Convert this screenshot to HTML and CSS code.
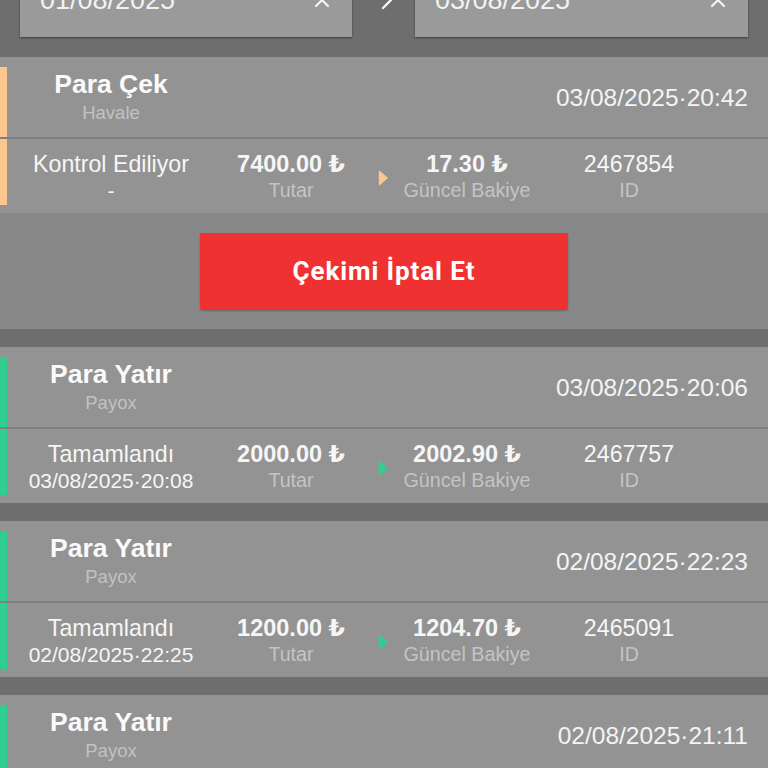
FILE: index.html
```html
<!DOCTYPE html>
<html lang="tr">
<head>
<meta charset="utf-8">
<link rel="stylesheet" href="styles.css">
</head>
<body>
<div class="filters">
  <div class="date-input"><span class="date-text">01/08/2025</span>
    <svg class="clear" viewBox="0 0 16 16" width="16" height="16"><path d="M2 2L14 14M14 2L2 14" stroke="#f4f4f4" stroke-width="2.2" stroke-linecap="round"/></svg>
  </div>
  <div class="sep-arrow"><svg viewBox="0 0 12 20" width="12" height="20"><path d="M2 2L10 10L2 18" fill="none" stroke="#f4f4f4" stroke-width="2.4" stroke-linecap="round" stroke-linejoin="round"/></svg></div>
  <div class="date-input"><span class="date-text">03/08/2025</span>
    <svg class="clear" viewBox="0 0 16 16" width="16" height="16"><path d="M2 2L14 14M14 2L2 14" stroke="#f4f4f4" stroke-width="2.2" stroke-linecap="round"/></svg>
  </div>
</div>

<div class="list">
  <div class="card withdraw">
    <div class="row-top">
      <div class="bar bar-top"></div>
      <div class="head"><div class="title">Para Çek</div><div class="sub">Havale</div></div>
      <div class="date">03/08/2025·20:42</div>
    </div>
    <div class="divider"></div>
    <div class="row-bottom">
      <div class="bar bar-bottom"></div>
      <div class="col c1"><div class="val">Kontrol Ediliyor</div><div class="val small">-</div></div>
      <div class="col c2"><div class="val bold">7400.00 ₺</div><div class="lbl">Tutar</div></div>
      <div class="col c-arrow"><svg viewBox="0 0 10 16" width="10" height="16"><path d="M1.5 1.5L9 8L1.5 14.5Z" class="tri" stroke-linejoin="round" stroke-width="1.5"/></svg></div>
      <div class="col c3"><div class="val bold">17.30 ₺</div><div class="lbl">Güncel Bakiye</div></div>
      <div class="col c4"><div class="val">2467854</div><div class="lbl">ID</div></div>
    </div>
    <div class="action">
      <button class="cancel">Çekimi İptal Et</button>
    </div>
  </div>

  <div class="card deposit">
    <div class="row-top">
      <div class="bar bar-top"></div>
      <div class="head"><div class="title">Para Yatır</div><div class="sub">Payox</div></div>
      <div class="date">03/08/2025·20:06</div>
    </div>
    <div class="divider"></div>
    <div class="row-bottom">
      <div class="bar bar-bottom"></div>
      <div class="col c1"><div class="val">Tamamlandı</div><div class="val small">03/08/2025·20:08</div></div>
      <div class="col c2"><div class="val bold">2000.00 ₺</div><div class="lbl">Tutar</div></div>
      <div class="col c-arrow"><svg viewBox="0 0 10 16" width="10" height="16"><path d="M1.5 1.5L9 8L1.5 14.5Z" class="tri" stroke-linejoin="round" stroke-width="1.5"/></svg></div>
      <div class="col c3"><div class="val bold">2002.90 ₺</div><div class="lbl">Güncel Bakiye</div></div>
      <div class="col c4"><div class="val">2467757</div><div class="lbl">ID</div></div>
    </div>
  </div>

  <div class="card deposit">
    <div class="row-top">
      <div class="bar bar-top"></div>
      <div class="head"><div class="title">Para Yatır</div><div class="sub">Payox</div></div>
      <div class="date">02/08/2025·22:23</div>
    </div>
    <div class="divider"></div>
    <div class="row-bottom">
      <div class="bar bar-bottom"></div>
      <div class="col c1"><div class="val">Tamamlandı</div><div class="val small">02/08/2025·22:25</div></div>
      <div class="col c2"><div class="val bold">1200.00 ₺</div><div class="lbl">Tutar</div></div>
      <div class="col c-arrow"><svg viewBox="0 0 10 16" width="10" height="16"><path d="M1.5 1.5L9 8L1.5 14.5Z" class="tri" stroke-linejoin="round" stroke-width="1.5"/></svg></div>
      <div class="col c3"><div class="val bold">1204.70 ₺</div><div class="lbl">Güncel Bakiye</div></div>
      <div class="col c4"><div class="val">2465091</div><div class="lbl">ID</div></div>
    </div>
  </div>

  <div class="card deposit">
    <div class="row-top">
      <div class="bar bar-top"></div>
      <div class="head"><div class="title">Para Yatır</div><div class="sub">Payox</div></div>
      <div class="date">02/08/2025·21:11</div>
    </div>
  </div>
</div>
</body>
</html>
```

FILE: styles.css
```css
html, body {
  margin: 0;
  padding: 0;
  background: #6e6e6e;
  font-family: "Liberation Sans", "DejaVu Sans", Arial, sans-serif;
  color: #f4f4f4;
  overflow: hidden;
  height: 768px;
}

.filters {
  height: 57px;
  box-sizing: border-box;
  padding: 0 20px 20px 20px;
  display: grid;
  grid-template-columns: 332px 63px 1fr;
  grid-template-rows: 37px;
  align-items: end;
  overflow: hidden;
}

.date-input {
  height: 56px;
  box-sizing: border-box;
  background: #9a9a9a;
  box-shadow: 0 1px 2px rgba(0, 0, 0, 0.45);
  display: flex;
  align-items: center;
  justify-content: space-between;
  padding: 0 22px 18px 20px;
}

.date-text {
  font-size: 27px;
  color: #f2f2f2;
}

.sep-arrow {
  height: 56px;
  display: flex;
  align-items: center;
  justify-content: center;
  padding: 0 0 18px 6px;
  box-sizing: border-box;
}

.list {
  display: flex;
  flex-direction: column;
  gap: 18px;
}

.card {
  background: #939393;
}

.row-top {
  height: 80px;
  display: flex;
  align-items: center;
}

.bar {
  width: 7px;
  align-self: stretch;
  flex: none;
}

.bar-top { margin-top: 10px; }
.bar-bottom { margin-bottom: 8px; }

.withdraw .bar { background: #fcc68f; }
.deposit .bar { background: #2fcf8f; }
.withdraw .tri { fill: #fcc68f; stroke: #fcc68f; }
.deposit .tri { fill: #2fcf8f; stroke: #2fcf8f; }

.head {
  width: 208px;
  display: flex;
  flex-direction: column;
  align-items: center;
  padding-top: 2px;
}

.title {
  font-size: 26.5px;
  font-weight: bold;
  line-height: 30px;
  color: #fafafa;
}

.sub {
  font-size: 18.5px;
  line-height: 28px;
  color: #c2c2c2;
}

.date {
  margin-left: auto;
  padding-right: 20px;
  font-size: 24.5px;
  color: #f4f4f4;
  padding-top: 2px;
}

.divider {
  height: 2px;
  background: #7f7f7f;
}

.row-bottom {
  height: 74px;
  display: flex;
  align-items: center;
}

.col {
  display: flex;
  flex-direction: column;
  align-items: center;
  flex: none;
  padding-top: 1px;
}

.c1 { width: 208px; }
.c2 { width: 152px; }
.c-arrow { width: 32px; padding-top: 3px; }
.c3 { width: 136px; }
.c4 { width: 188px; }

.val {
  font-size: 23.2px;
  line-height: 27px;
  color: #f6f6f6;
  white-space: nowrap;
}

.val.small {
  font-size: 21px;
  line-height: 25px;
}

.val.bold {
  font-weight: bold;
  font-size: 23.5px;
}

.lbl {
  font-size: 19.7px;
  line-height: 25px;
  color: #c4c4c4;
}

.action {
  height: 116px;
  background: #888888;
  display: flex;
  align-items: center;
  justify-content: center;
}

.cancel {
  width: 368px;
  height: 77px;
  border: none;
  border-radius: 2px;
  background: #ef3131;
  color: #ffffff;
  font-family: Roboto, "Liberation Sans", sans-serif;
  font-weight: bold;
  font-size: 26px;
  letter-spacing: 0.9px;
  box-shadow: 0 1px 2px rgba(0, 0, 0, 0.25);
}
```
